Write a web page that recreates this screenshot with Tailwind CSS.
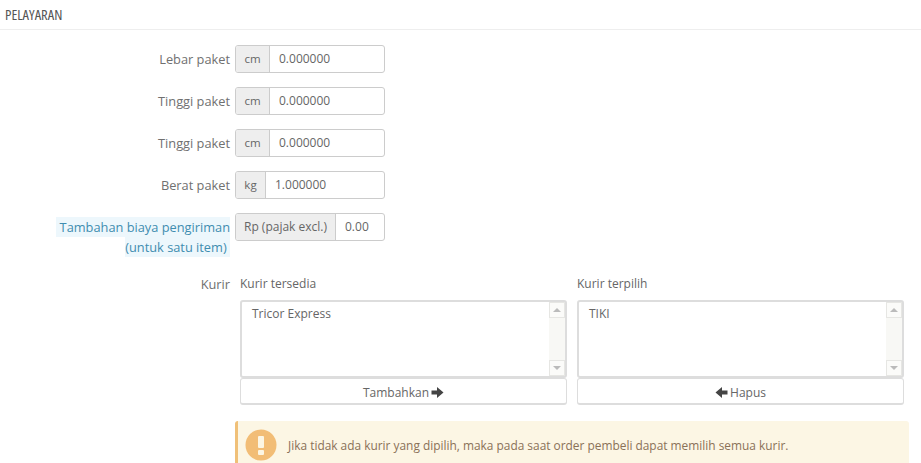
<!DOCTYPE html>
<html>
<head>
<meta charset="utf-8">
<script src="https://cdn.jsdelivr.net/npm/@tailwindcss/browser@4"></script>
</head>
<body class="bg-white font-['Open_Sans',sans-serif] text-[12px] text-[#666] overflow-hidden">
<div class="w-[921px] h-[463px] overflow-hidden">
  <div class="h-[30px] border-b border-[#eee] pl-[5px] pt-[7px] text-[14.6px] leading-[15px] text-[#555] [font-stretch:85%]">PELAYARAN</div>

  <div class="flex flex-col pt-[15px]">
    <div class="flex h-[28px] mb-[14px]">
      <label class="w-[230px] text-right text-[12.8px] leading-[29px] text-[#707070]">Lebar paket</label>
      <div class="ml-[5px] flex w-[150px] h-[28px] border border-[#ccc] rounded-[3px] overflow-hidden">
        <span class="w-[34px] bg-[#eee] border-r border-[#ccc] text-center leading-[26px] text-[11.5px]">cm</span>
        <span class="flex-1 pl-[9px] leading-[26px] text-[#666]">0.000000</span>
      </div>
    </div>
    <div class="flex h-[28px] mb-[14px]">
      <label class="w-[230px] text-right text-[12.8px] leading-[29px] text-[#707070]">Tinggi paket</label>
      <div class="ml-[5px] flex w-[150px] h-[28px] border border-[#ccc] rounded-[3px] overflow-hidden">
        <span class="w-[34px] bg-[#eee] border-r border-[#ccc] text-center leading-[26px] text-[11.5px]">cm</span>
        <span class="flex-1 pl-[9px] leading-[26px] text-[#666]">0.000000</span>
      </div>
    </div>
    <div class="flex h-[28px] mb-[14px]">
      <label class="w-[230px] text-right text-[12.8px] leading-[29px] text-[#707070]">Tinggi paket</label>
      <div class="ml-[5px] flex w-[150px] h-[28px] border border-[#ccc] rounded-[3px] overflow-hidden">
        <span class="w-[34px] bg-[#eee] border-r border-[#ccc] text-center leading-[26px] text-[11.5px]">cm</span>
        <span class="flex-1 pl-[9px] leading-[26px] text-[#666]">0.000000</span>
      </div>
    </div>
    <div class="flex h-[28px] mb-[14px]">
      <label class="w-[230px] text-right text-[12.8px] leading-[29px] text-[#707070]">Berat paket</label>
      <div class="ml-[5px] flex w-[150px] h-[28px] border border-[#ccc] rounded-[3px] overflow-hidden">
        <span class="w-[30px] bg-[#eee] border-r border-[#ccc] text-center leading-[26px] text-[11.5px]">kg</span>
        <span class="flex-1 pl-[9px] leading-[26px] text-[#666]">1.000000</span>
      </div>
    </div>
    <div class="flex h-[57px]">
      <label class="w-[230px] text-right pt-[4px] text-[12.8px] leading-[20px] text-[#3f8db0]">
        <span class="bg-[#edf7fc] py-[1px] pl-[4px]">Tambahan biaya pengiriman<br>(untuk satu item)&nbsp;</span>
      </label>
      <div class="ml-[5px] flex w-[150px] h-[28px] border border-[#ccc] rounded-[3px] overflow-hidden">
        <span class="w-[100px] bg-[#eee] border-r border-[#ccc] text-center leading-[26px] text-[12px] whitespace-nowrap">Rp (pajak excl.)</span>
        <span class="flex-1 pl-[9px] leading-[26px] text-[#666]">0.00</span>
      </div>
    </div>
    <div class="flex">
      <label class="w-[230px] text-right text-[12.8px] leading-[29px] text-[#707070]">Kurir</label>
      <div class="ml-[10px] flex gap-[10px] w-[664px]">
        <div class="w-[327px]">
          <div class="h-[30px] leading-[28px] text-[12px] text-[#666]">Kurir tersedia</div>
          <div class="relative h-[78px] border-2 border-[#ddd] rounded-[3px] bg-white pl-[10px] pt-[3px] leading-[18px] text-[#666]">
            Tricor Express
            <div class="absolute right-0 top-0 bottom-0 w-[16px] flex flex-col bg-[#f8f8f5]">
              <div class="h-[16px] bg-[#fbfbf9] border border-[#e6e6e3] flex items-center justify-center"><div class="w-0 h-0 border-x-[4px] border-x-transparent border-b-[4px] border-b-[#bbb]"></div></div>
              <div class="flex-1"></div>
              <div class="h-[16px] bg-[#fbfbf9] border border-[#e6e6e3] flex items-center justify-center"><div class="w-0 h-0 border-x-[4px] border-x-transparent border-t-[4px] border-t-[#bbb]"></div></div>
            </div>
          </div>
          <button class="w-full h-[27px] border border-[#ddd] border-b-2 rounded-[3px] bg-white text-[#666] text-[12px] pt-[3px] flex items-center justify-center gap-[2px]">Tambahkan
            <svg width="13" height="13" viewBox="0 0 13 13" class="text-[#444]"><path d="M0.5 4.5H6V1L12.5 6.5L6 12V8.5H0.5Z" fill="currentColor"/></svg>
          </button>
        </div>
        <div class="w-[327px]">
          <div class="h-[30px] leading-[28px] text-[12px] text-[#666]">Kurir terpilih</div>
          <div class="relative h-[78px] border-2 border-[#ddd] rounded-[3px] bg-white pl-[10px] pt-[3px] leading-[18px] text-[#666]">
            TIKI
            <div class="absolute right-0 top-0 bottom-0 w-[16px] flex flex-col bg-[#f8f8f5]">
              <div class="h-[16px] bg-[#fbfbf9] border border-[#e6e6e3] flex items-center justify-center"><div class="w-0 h-0 border-x-[4px] border-x-transparent border-b-[4px] border-b-[#bbb]"></div></div>
              <div class="flex-1"></div>
              <div class="h-[16px] bg-[#fbfbf9] border border-[#e6e6e3] flex items-center justify-center"><div class="w-0 h-0 border-x-[4px] border-x-transparent border-t-[4px] border-t-[#bbb]"></div></div>
            </div>
          </div>
          <button class="w-full h-[27px] border border-[#ddd] border-b-2 rounded-[3px] bg-white text-[#666] text-[12px] pt-[3px] flex items-center justify-center gap-[2px]">
            <svg width="13" height="13" viewBox="0 0 13 13" class="text-[#444]"><path d="M12.5 4.5H7V1L0.5 6.5L7 12V8.5H12.5Z" fill="currentColor"/></svg>Hapus
          </button>
        </div>
      </div>
    </div>
    <div class="ml-[235px] mt-[16px] w-[674px] h-[60px] bg-[#fcf6e4] border-l-[3px] border-[#f0c078] rounded-[3px] flex items-start pl-[7px] pt-[8px] text-[#8a7158] text-[11.9px]">
      <svg width="32" height="32" viewBox="0 0 32 32" class="shrink-0"><circle cx="16" cy="16" r="15.5" fill="#f2bd76"/><rect x="13" y="7" width="6" height="12" rx="1" fill="#fcf6e4"/><rect x="13" y="21" width="6" height="5" rx="1" fill="#fcf6e4"/></svg>
      <span class="ml-[11px] mt-[7px] leading-[18px]">Jika tidak ada kurir yang dipilih, maka pada saat order pembeli dapat memilih semua kurir.</span>
    </div>
  </div>
</div>
</body>
</html>
